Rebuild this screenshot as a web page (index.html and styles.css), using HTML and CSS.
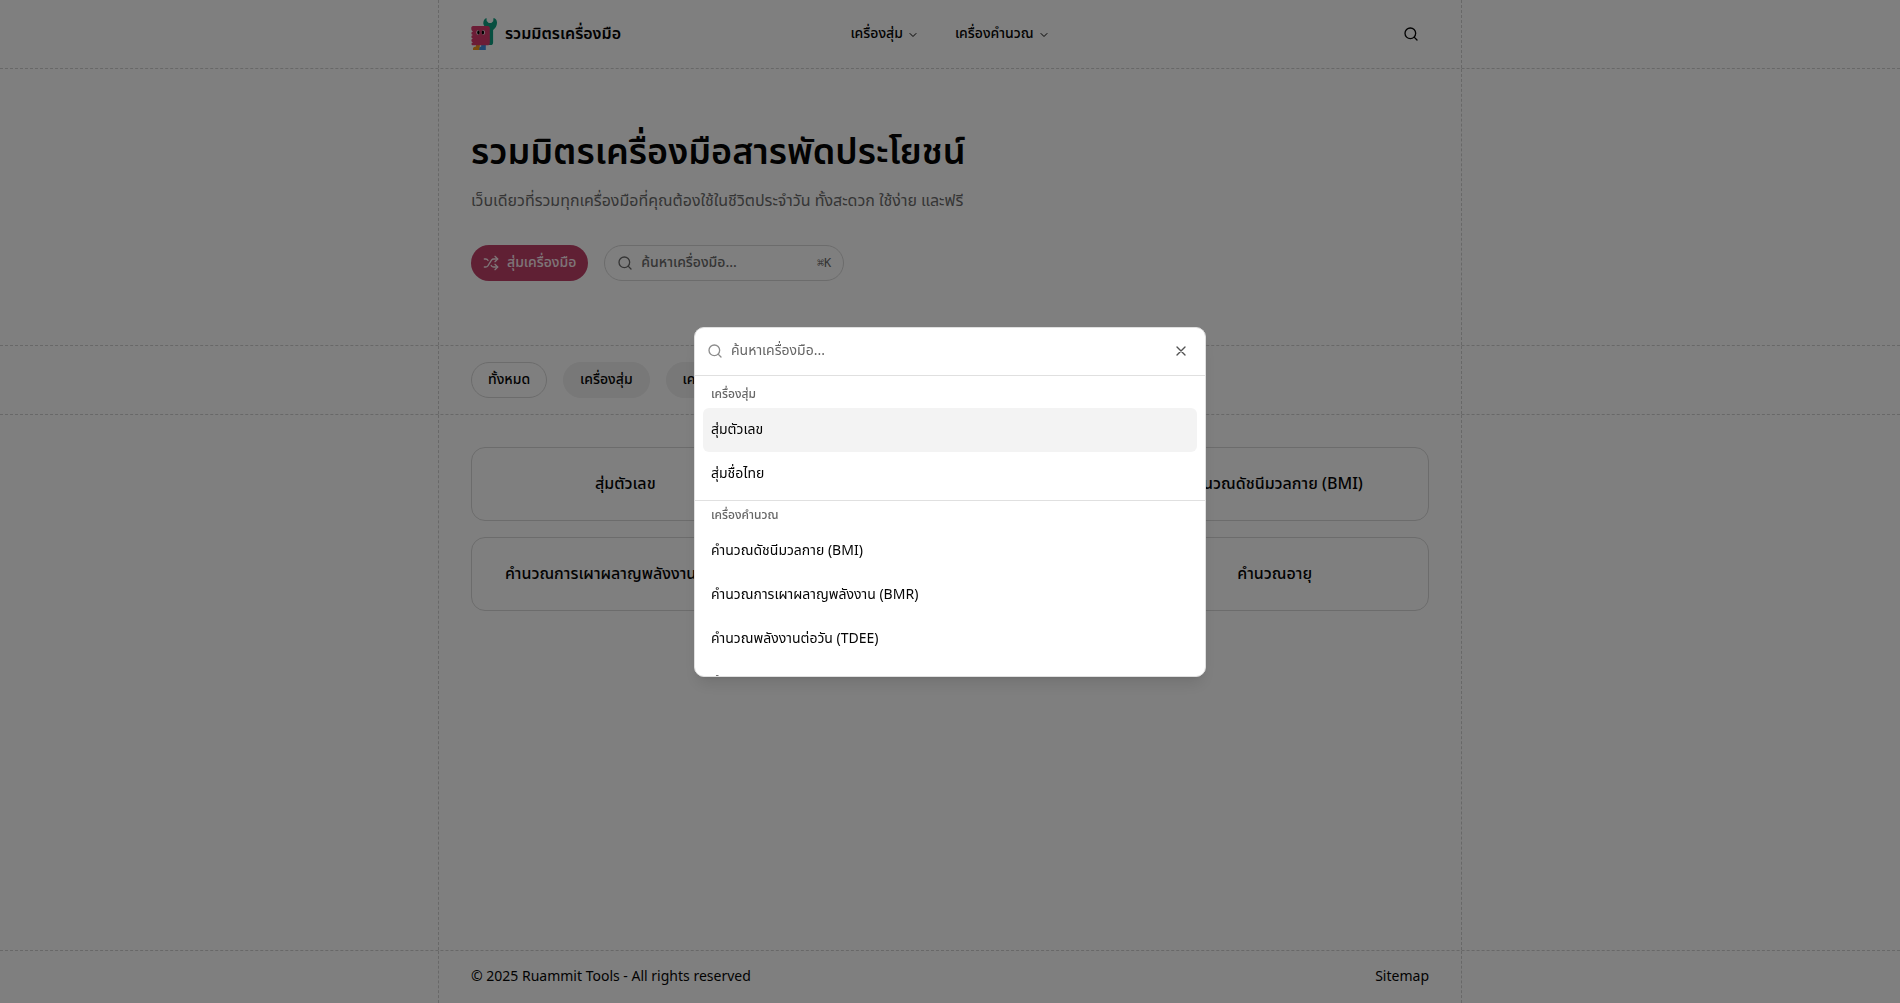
FILE: index.html
```html
<!DOCTYPE html>
<html lang="th">
<head>
<meta charset="utf-8">
<meta name="viewport" content="width=device-width, initial-scale=1">
<title>รวมมิตรเครื่องมือ</title>
<link rel="stylesheet" href="styles.css">
</head>
<body>
<svg class="sprite" aria-hidden="true">
  <symbol id="search" viewBox="0 0 24 24"><circle cx="11" cy="11" r="8"/><path d="m21 21-4.3-4.3"/></symbol>
  <symbol id="chevron" viewBox="0 0 24 24"><path d="m6 9 6 6 6-6"/></symbol>
  <symbol id="close" viewBox="0 0 24 24"><path d="M18 6 6 18M6 6l12 12"/></symbol>
  <symbol id="shuffle" viewBox="0 0 24 24"><path d="m18 14 4 4-4 4"/><path d="m18 2 4 4-4 4"/><path d="M2 18h1.973a4 4 0 0 0 3.3-1.7l5.454-8.6a4 4 0 0 1 3.3-1.7H22"/><path d="M2 6h1.972a4 4 0 0 1 3.6 2.2"/><path d="M22 18h-6.041a4 4 0 0 1-3.3-1.8l-.359-.45"/></symbol>
</svg>

<div class="page">
  <header class="band">
    <div class="container header">
      <a class="brand" href="#">
        <svg class="logo" viewBox="0 0 26 32" aria-hidden="true">
          <path fill="#0f9f80" d="M15.500 0C13 1 12 3.500 12.400 6c.4 2 2 3.500 4.600 4v17h2.500c1.800 0 2.600-1 2.600-2.600V12c2.500-1.800 4-4.500 3.900-7.500C25.900 2 24.700.6 22.500 0l-.3 3.200-1.900 1.800h-2.600l-2-1.900Z"/>
          <path fill="#f0961c" d="M5 26.500h3.800V32H2v-1.500c0-1 1.200-1.700 3-2Z"/>
          <path fill="#3f8fe0" d="M10.200 26.500h4.600V32H8.300v-1.500c0-1 .7-1.700 1.900-2Z"/>
          <path fill="#d93a6c" d="M2 8h14.500c1.500 0 2.300.8 2.300 2.300V25c0 1.500-.8 2.300-2.300 2.300H2c-1 0-1.500-.5-1.500-1.400s.7-1.500 1.700-1.700c-1.200-.2-1.800-.8-1.800-1.800s.6-1.600 1.700-1.800C1 20.400.4 19.800.4 18.800s.6-1.600 1.700-1.800C1 16.800.4 16.200.4 15.200s.6-1.600 1.700-1.800C1 13.200.3 12.400.3 10.800 0 9 1 8 2 8Z"/>
          <ellipse cx="7" cy="14.500" rx="1.600" ry="2.200" fill="#fff"/><ellipse cx="12.300" cy="14.500" rx="1.600" ry="2.200" fill="#fff"/>
          <ellipse cx="7.400" cy="14.500" rx="1.200" ry="1.900"/><ellipse cx="11.900" cy="14.500" rx="1.200" ry="1.900"/>
        </svg>
        <span>รวมมิตรเครื่องมือ</span>
      </a>
      <nav class="nav">
        <button class="nav-item" type="button">เครื่องสุ่ม<svg class="icon tiny"><use href="#chevron"/></svg></button>
        <button class="nav-item" type="button">เครื่องคำนวณ<svg class="icon tiny"><use href="#chevron"/></svg></button>
      </nav>
      <button class="icon-button" type="button" aria-label="ค้นหา"><svg class="icon"><use href="#search"/></svg></button>
    </div>
  </header>

  <section class="band">
    <div class="container hero">
      <h1>รวมมิตรเครื่องมือสารพัดประโยชน์</h1>
      <p>เว็บเดียวที่รวมทุกเครื่องมือที่คุณต้องใช้ในชีวิตประจำวัน ทั้งสะดวก ใช้ง่าย และฟรี</p>
      <div class="actions">
        <button class="primary" type="button"><svg class="icon"><use href="#shuffle"/></svg>สุ่มเครื่องมือ</button>
        <button class="search" type="button"><svg class="icon"><use href="#search"/></svg><span>ค้นหาเครื่องมือ...</span><kbd>⌘K</kbd></button>
      </div>
    </div>
  </section>

  <section class="band">
    <div class="container filters">
      <button class="pill active" type="button">ทั้งหมด</button>
      <button class="pill" type="button">เครื่องสุ่ม</button>
      <button class="pill" type="button">เครื่องคำนวณ</button>
    </div>
  </section>

  <main class="band grow">
    <div class="container cards">
      <a class="card" href="#">สุ่มตัวเลข</a>
      <a class="card" href="#">สุ่มชื่อไทย</a>
      <a class="card" href="#">คำนวณดัชนีมวลกาย (BMI)</a>
      <a class="card" href="#">คำนวณการเผาผลาญพลังงาน (BMR)</a>
      <a class="card" href="#">คำนวณพลังงานต่อวัน (TDEE)</a>
      <a class="card" href="#">คำนวณอายุ</a>
    </div>
  </main>

  <footer>
    <div class="container footer">
      <span>© 2025 Ruammit Tools - All rights reserved</span>
      <a href="#">Sitemap</a>
    </div>
  </footer>
</div>

<div class="overlay">
  <div class="dialog" role="dialog" aria-modal="true" aria-label="ค้นหาเครื่องมือ">
    <div class="dialog-search">
      <svg class="icon"><use href="#search"/></svg>
      <input type="text" placeholder="ค้นหาเครื่องมือ..." aria-label="ค้นหาเครื่องมือ">
      <button class="close" type="button" aria-label="ปิด"><svg class="icon"><use href="#close"/></svg></button>
    </div>
    <div class="results">
      <div class="group">
        <h2>เครื่องสุ่ม</h2>
        <a class="result selected" href="#">สุ่มตัวเลข</a>
        <a class="result" href="#">สุ่มชื่อไทย</a>
      </div>
      <div class="group">
        <h2>เครื่องคำนวณ</h2>
        <a class="result" href="#">คำนวณดัชนีมวลกาย (BMI)</a>
        <a class="result" href="#">คำนวณการเผาผลาญพลังงาน (BMR)</a>
        <a class="result" href="#">คำนวณพลังงานต่อวัน (TDEE)</a>
        <a class="result" href="#">คำนวณอายุ</a>
      </div>
    </div>
  </div>
</div>
</body>
</html>
```
FILE: styles.css
```css
*, *::before, *::after { box-sizing: border-box; }

body {
  margin: 0;
  background: #fff;
  color: #050505;
  font: 14px/20px "Noto Sans Thai", "Noto Sans", sans-serif;
}

h1, h2, p { margin: 0; }
a { color: inherit; text-decoration: none; }
button {
  margin: 0;
  padding: 0;
  border: 0;
  background: none;
  color: inherit;
  font: inherit;
  font-weight: 500;
  cursor: pointer;
}

.sprite { display: none; }
.icon {
  flex: none;
  width: 16px;
  height: 16px;
  fill: none;
  stroke: currentColor;
  stroke-width: 2;
  stroke-linecap: round;
  stroke-linejoin: round;
}
.tiny { width: 12px; height: 12px; margin-top: 2px; }

.page {
  display: flex;
  flex-direction: column;
  min-height: 100vh;
}
.band { border-bottom: 1px dashed #d0d0d0; }
.container {
  max-width: 1024px;
  margin: 0 auto;
  padding: 0 32px;
  border: dashed #d0d0d0;
  border-width: 0 1px;
}
.grow { display: flex; flex: 1; }

.header {
  display: grid;
  grid-template-columns: 1fr auto 1fr;
  align-items: center;
  padding-block: 16px;
}
.brand {
  display: flex;
  align-items: center;
  gap: 8px;
  font-size: 16px;
  font-weight: 600;
}
.logo { width: 26px; height: 32px; }
.nav { display: flex; gap: 4px; }
.nav-item {
  display: flex;
  align-items: center;
  gap: 4px;
  height: 36px;
  padding: 0 16px;
}
.icon-button {
  display: grid;
  place-items: center;
  justify-self: end;
  width: 36px;
  height: 36px;
}

.hero { padding-block: 64px; }
.hero h1 { font-size: 36px; line-height: 40px; font-weight: 600; }
.hero p { margin-top: 16px; color: #6b6b6b; font-size: 16px; line-height: 24px; }
.actions { display: flex; gap: 16px; margin-top: 32px; }
.primary, .search {
  display: flex;
  align-items: center;
  gap: 8px;
  height: 36px;
  padding: 0 12px;
  border-radius: 18px;
}
.primary { background: #c04068; color: #fdeaf0; }
.search { width: 240px; border: 1px solid #d8d8d8; color: #6b6b6b; }
.search kbd { margin-left: auto; font: 500 12px/16px "DejaVu Sans Mono", monospace; }

.filters { display: flex; gap: 16px; padding-block: 16px; }
.pill {
  height: 36px;
  padding: 0 16px;
  border: 1px solid #f0f0f0;
  border-radius: 18px;
  background: #f0f0f0;
}
.pill.active { border-color: #d8d8d8; background: #fff; }

.cards {
  display: grid;
  flex: 1;
  grid-template-columns: repeat(3, 1fr);
  align-content: start;
  gap: 16px;
  padding-block: 32px;
}
.card {
  padding: 24px;
  border: 1px solid #d8d8d8;
  border-radius: 14px;
  font-size: 16px;
  line-height: 24px;
  font-weight: 500;
  text-align: center;
  white-space: nowrap;
}

.footer { display: flex; justify-content: space-between; padding-block: 16px; }

.overlay {
  position: fixed;
  inset: 0;
  display: grid;
  place-items: center;
  background: rgb(0 0 0 / 50%);
}
.dialog {
  width: 100%;
  max-width: 512px;
  overflow: hidden;
  border: 1px solid #e0e0e0;
  border-radius: 10px;
  background: #fff;
  box-shadow: 0 10px 15px -3px rgb(0 0 0 / 10%), 0 4px 6px -4px rgb(0 0 0 / 10%);
}
.dialog-search {
  display: flex;
  align-items: center;
  gap: 8px;
  height: 48px;
  padding: 0 16px 0 12px;
  border-bottom: 1px solid #e0e0e0;
  color: #8c8c8c;
}
.dialog-search input {
  flex: 1;
  min-width: 0;
  padding: 0;
  border: 0;
  outline: 0;
  background: none;
  color: #050505;
  font: inherit;
}
.dialog-search input::placeholder { color: #666; opacity: 1; }
.close { display: flex; color: #525252; }

.results { max-height: 300px; overflow: hidden; }
.group { padding: 4px 8px; }
.group + .group { padding-top: 0; border-top: 1px solid #e0e0e0; }
.group h2 {
  padding: 6px 8px;
  color: #666;
  font-size: 12px;
  line-height: 16px;
  font-weight: 500;
}
.result {
  display: block;
  padding: 12px 8px;
  border-radius: 6px;
}
.result.selected { background: #f3f3f3; }
```
